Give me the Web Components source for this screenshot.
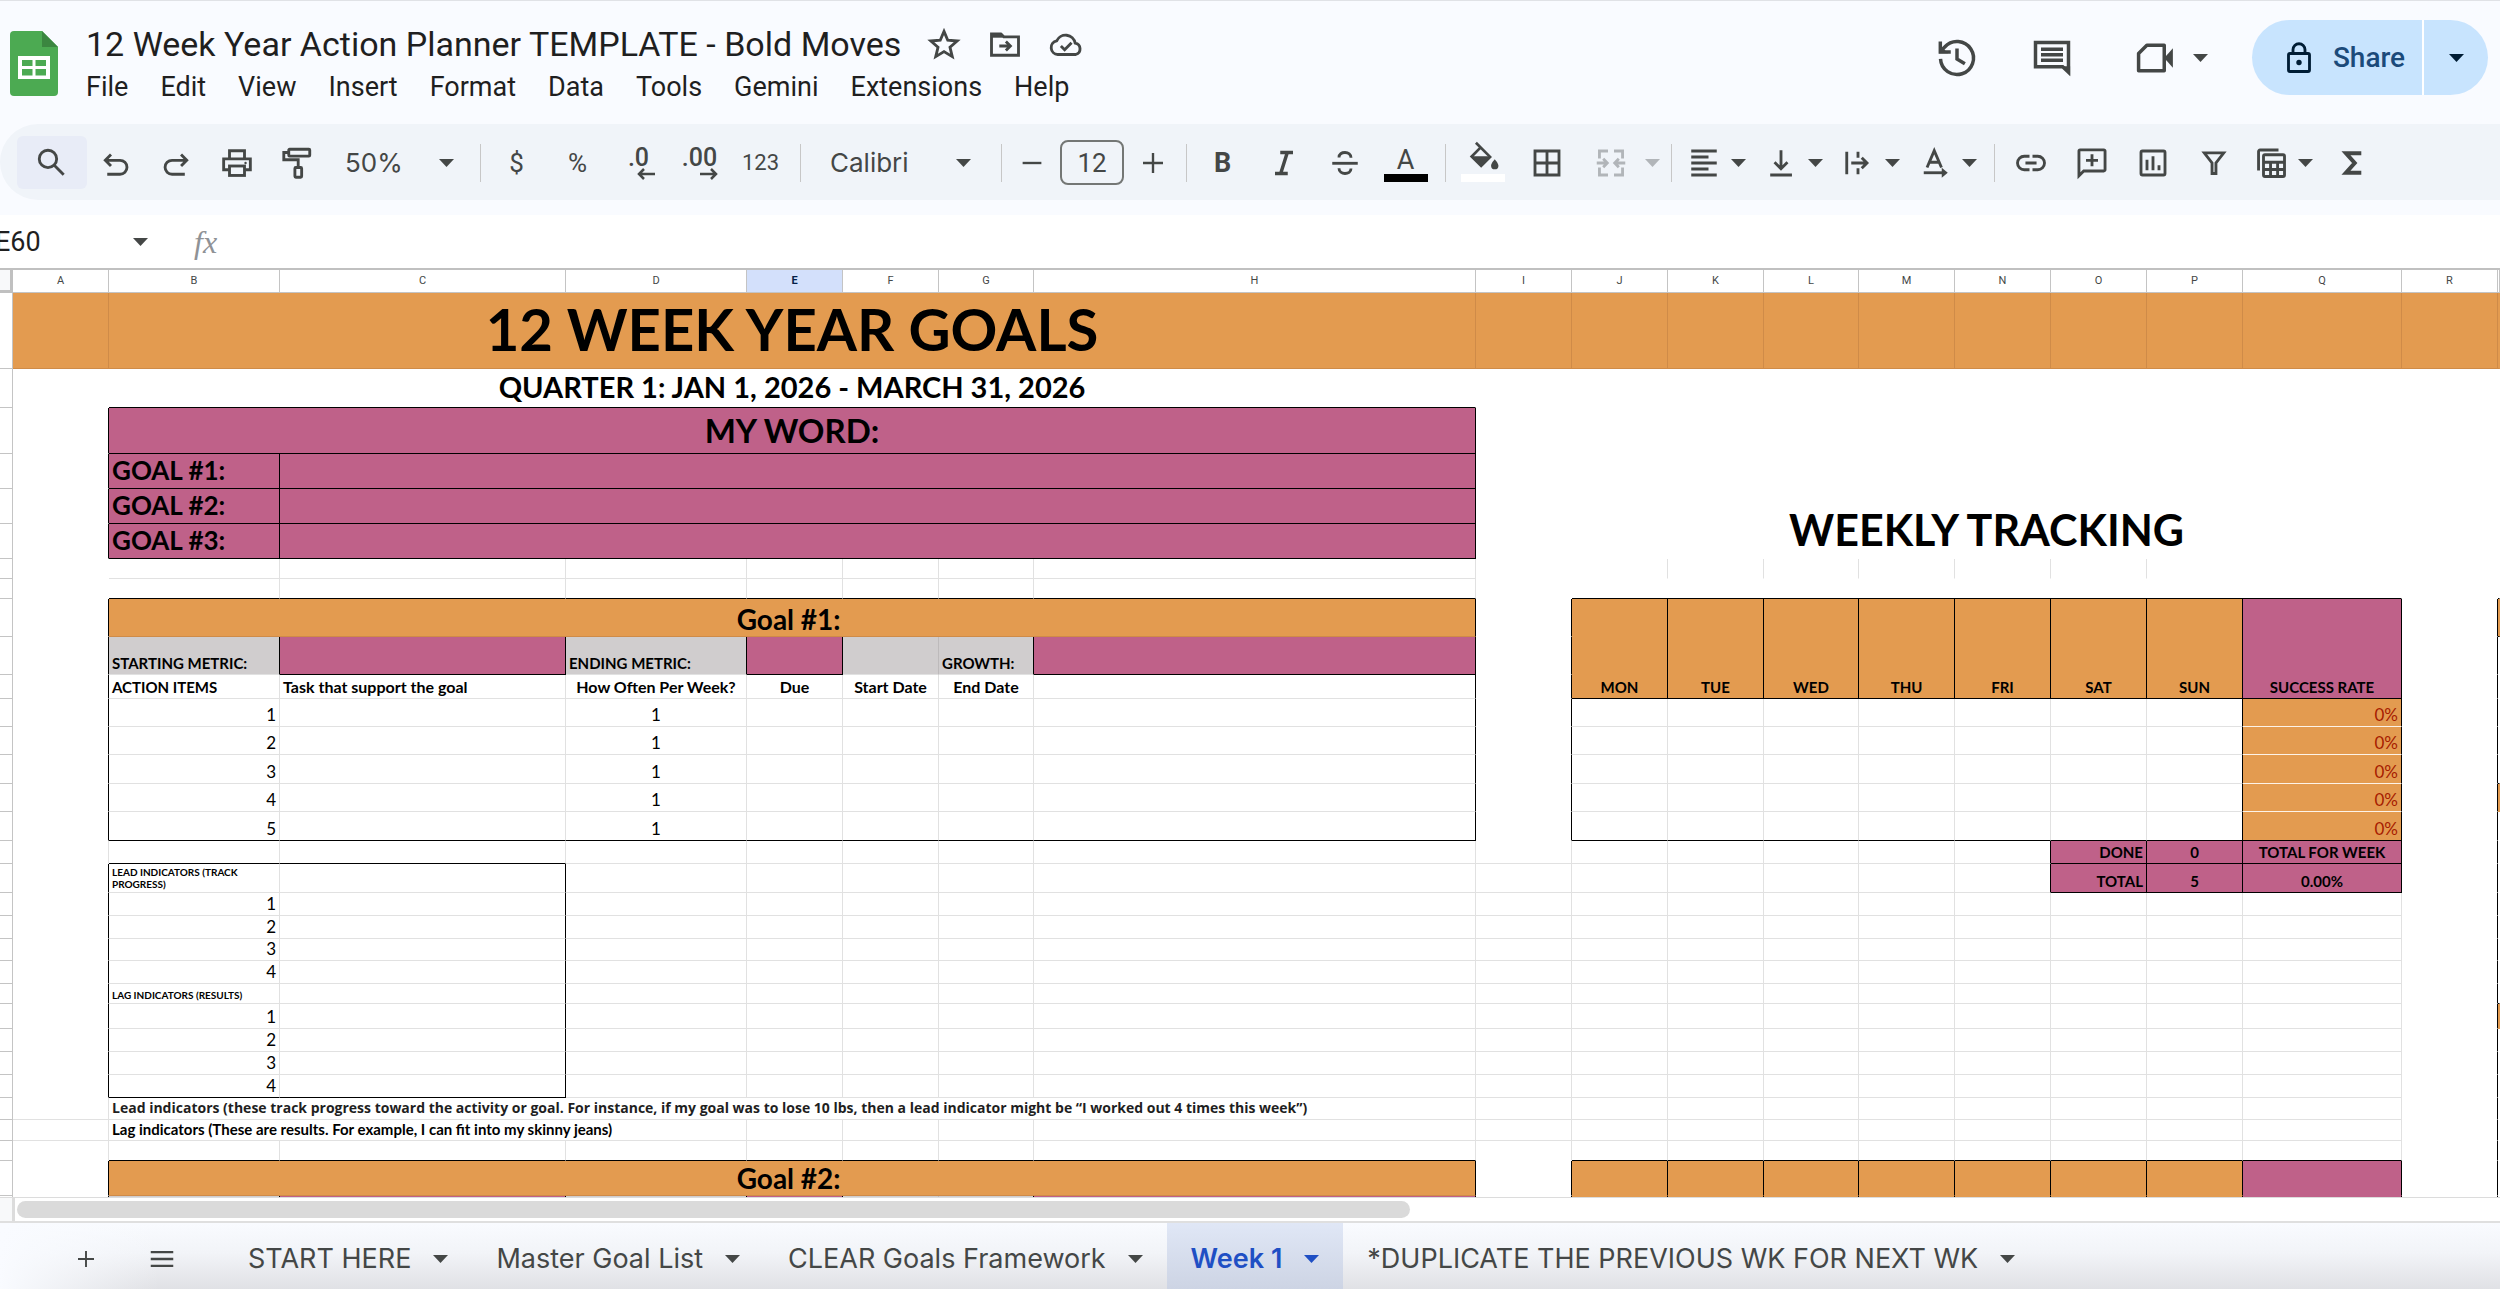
<!DOCTYPE html>
<html lang="en">
<head>
<meta charset="utf-8">
<title>12 Week Year Action Planner TEMPLATE - Bold Moves</title>
<style>
  html, body { margin: 0; height: 100%; background: #fff; overflow: hidden; }
  body { font-family: Roboto, "Liberation Sans", sans-serif; color: #1f1f1f; }
</style>
</head>
<body>
<sheets-app></sheets-app>

<script>
const ICONS = {
  star: '<path d="M12 3.6l2.5 5.9 6.3.5-4.8 4.2 1.5 6.2L12 17.1l-5.5 3.3L8 14.2 3.200 10l6.300-.5z"/>',
  move: '<path d="M3 5.200h6.200l2 2H21v12.300H3z"/><path d="M3 6.500h7.500" stroke-width="2.600"/><path d="M8.200 13.300h7M12.600 10.300l3 3-3 3"/>',
  cloud: '<path d="M6.500 19a4.600 4.600 0 0 1-.7-9.100 6.500 6.500 0 0 1 12.300 1.500A3.900 3.900 0 0 1 18.500 19z"/><path d="M8.600 13.300l2.500 2.500 4.600-4.600"/>',
  history: '<path d="M3 12.500a9 9 0 1 0 2.300-6.500L3 8.300"/><path d="M2.900 3v5.700h5.700"/><path d="M2.200 9.400V4.500l4.900 4.900z" fill="currentColor" stroke="none"/><path d="M12 6.800v5.700l4.300 2.600"/>',
  comment: '<path d="M3 3.500h18v16.300l-3.200-3H3z"/><path d="M17.500 16.500h4.400v5.200z" fill="currentColor" stroke="none"/><path d="M6 7.200h12M6 10.200h12M6 13.200h12"/>',
  video: '<path d="M2.500 9.500L7 5h9.500v14h-14z" stroke-linejoin="round"/><path d="M16.500 12l4.700-5.300v10.600z" fill="currentColor" stroke="none"/>',
  lock: '<rect x="5" y="9" width="14" height="12" rx="1"/><path d="M8 9V6.500a4 4 0 0 1 8 0V9"/><circle cx="12" cy="15" r="1.800" fill="currentColor" stroke="none"/>',
  search: '<circle cx="9.300" cy="9.300" r="5.800"/><path d="M13.500 13.500l6.300 6.300"/>',
  undo: '<path d="M8.500 4.900L4.700 8.700l3.800 3.800M4.700 8.700h9.800a4.600 4.600 0 0 1 0 9.300H6" transform="translate(-.5 1.500)"/>',
  redo: '<path d="M15.500 4.900l3.800 3.800-3.800 3.800M19.300 8.700H9.500a4.600 4.600 0 0 0 0 9.300H18" transform="translate(-.8 1.500)"/>',
  print: '<path d="M7 9V3.800h10V9M6.500 16.500H3.100V9.200h17.800v7.300h-3.400"/><rect x="7" y="14" width="10" height="6.300"/><circle cx="17.700" cy="12" r=".8" fill="currentColor" stroke="none"/>',
  paint: '<rect x="6.500" y="2.800" width="14" height="4.600" rx=".6"/><path d="M6.500 5H3.200v4.800h9.600v5"/><rect x="10.600" y="15" width="4.500" height="6.500" rx=".6"/>',
  minus: '<path d="M4.500 12h15"/>',
  plus: '<path d="M12 4v16M4 12h16"/>',
  italic: '<path d="M9.500 5h8.500M6 19h8.500M14.200 5l-4.400 14" stroke-width="2.300"/>',
  strike: '<path d="M3.500 12.200h17"/><path d="M16 8.500c0-2.300-1.800-3.500-4-3.500S8 6 8 8.300M8 15.500c0 2.400 2 3.500 4 3.500s4-1 4-3.300"/>',
  fill: '<path d="M7 1l10 10-6.300 6.300L4 10.700l6.200-6.200" transform="translate(0 -.5)"/><path d="M3.300 10h14l-6.600 7.200z" fill="currentColor" stroke="none"/><path d="M20.300 12.200s2.600 2.900 2.600 4.500a2.600 2.600 0 0 1-5.200 0c0-1.600 2.600-4.500 2.600-4.500z" fill="currentColor" stroke="none"/>',
  borders: '<path d="M4 4h16v16H4zM12 4v16M4 12h16"/>',
  merge: '<path d="M10 4H4.300v5M4.300 15v5H10M14 4h5.700v5M19.700 15v5H14"/><path d="M2.500 12h6.500M6.800 9.200L9.500 12l-2.700 2.800M21.500 12H15M17.200 9.200L14.500 12l2.700 2.800" stroke-width="1.900"/>',
  align: '<path d="M3.500 4h17M3.500 8h11.500M3.500 12h17M3.500 16h11.500M3.500 20h17"/>',
  bottom: '<path d="M12 3.500v12M7.700 11.500l4.300 4.300 4.300-4.300M4.800 20h14.500"/>',
  wrap: '<path d="M4.500 4.500v15M12 4.500v4M12 15.500v4M7.500 12h10M14.500 8.500l3.500 3.500-3.500 3.500"/>',
  rotate: '<path d="M6.700 15L11.500 3.800 16.300 15M8.300 11.500h6.400"/><path d="M4.500 18.500h14"/><path d="M16.500 15.200l4 3.300-4 3.300z" fill="currentColor" stroke="none"/>',
  link: '<path d="M11 7.500H7.500a4.500 4.500 0 0 0 0 9H11M13 7.500h3.500a4.500 4.500 0 0 1 0 9H13M8.300 12h7.400"/>',
  addcomment: '<path d="M3.300 20.500V4a.8.8 0 0 1 .8-.8h15.800a.8.8 0 0 1 .8.8v12.500a.8.8 0 0 1-.8.800H6.500z"/><path d="M12 6.200v8M8 10.200h8"/>',
  chart: '<rect x="4" y="4" width="16" height="16" rx="1"/><path d="M8 9.800v7M12 7.500v9.300M16 13.500v3.300"/>',
  filter: '<path d="M5.500 5.200h13L13.300 12v7h-2.600v-7z"/>',
  views: '<path d="M3.700 17V4.300a1 1 0 0 1 1-1H17"/><rect x="7" y="6.500" width="14" height="14.500" rx="1"/><path d="M7 11.500h14M7 16.300h14M11.700 11.500V21M16.400 11.500V21"/>',
  sigma: '<path d="M18.200 5.500H8l5.800 6.500L8 18.500h10.200" stroke-width="2.700"/>',
  lines: '<path d="M3 6.500h18M3 12h18M3 17.500h18"/>'
};

class UiIcon extends HTMLElement {
  connectedCallback() {
    const r = this.attachShadow({ mode: 'open' });
    r.innerHTML = `<style>:host{display:inline-flex;flex:none;width:var(--icon,36px);height:var(--icon,36px)}
      svg{width:100%;height:100%;fill:none;stroke:currentColor;stroke-width:1.9;overflow:visible}</style>
      <svg viewBox="0 0 24 24" aria-hidden="true">${ICONS[this.getAttribute('name')]}</svg>`;
  }
}
customElements.define('ui-icon', UiIcon);

class UiCaret extends HTMLElement {
  connectedCallback() {
    const r = this.attachShadow({ mode: 'open' });
    r.innerHTML = `<style>:host{display:inline-flex;flex:none;width:15px;height:8px}svg{width:100%;height:100%}</style>
      <svg viewBox="0 0 15 8" aria-hidden="true"><path d="M0 0h15L7.500 8z" fill="currentColor"/></svg>`;
  }
}
customElements.define('ui-caret', UiCaret);

const RESET = `:host,*{box-sizing:border-box}button,select,input{font:inherit;color:inherit;background:none;border:0;margin:0;padding:0;outline:0;border-radius:0}
  button{display:inline-flex;align-items:center;justify-content:center}select{appearance:none}`;

class DocHeader extends HTMLElement {
  connectedCallback() {
    const menus = ['File','Edit','View','Insert','Format','Data','Tools','Gemini','Extensions','Help'];
    const r = this.attachShadow({ mode: 'open' });
    r.innerHTML = `<style>${RESET}
      :host{display:flex;height:124px;padding:0 12px 0 10px;border-top:1px solid #e0e2e6}
      .logo{width:48px;height:65px;margin:30px 28px 0 0;flex:none}
      .doc{display:flex;flex-direction:column;padding-top:21px}
      .name{display:flex;align-items:center;gap:25px}
      h1{margin:0;font-weight:400;font-size:34px;line-height:44px;white-space:nowrap}
      .name button{color:#444746}
      nav{display:flex;gap:32px;font-size:27px;line-height:42px}
      .actions{display:flex;align-items:flex-start;margin-left:auto;color:#444746}
      .actions>button{height:75px;margin-top:19px}
      .hist,.comm{--icon:44px;width:95px}
      .meet{--icon:44px;width:144px;gap:15px;padding-right:18px;margin-left:9px}
      .share{display:flex;margin-top:19px;height:75px;border-radius:38px;overflow:hidden;background:#c8e4fe;color:#001d35}
      .share button{height:75px}
      .main{width:172px;gap:16px;padding-left:12px;font-size:28px;font-weight:500;border-right:2px solid #fff}
      .main span{color:#1b4a7a}
      .more{width:64px}
    </style>
    <svg class="logo" viewBox="0 0 48 65" aria-hidden="true"><path d="M4 0h28l16 16v45a4 4 0 0 1-4 4H4a4 4 0 0 1-4-4V4a4 4 0 0 1 4-4z" fill="#4caa52"/><path d="M32 0l16 16H32z" fill="#3b8640"/><path d="M8 25h32v23H8z" fill="#fff"/><path d="M12 29h10.500v6H12zM25.500 29H36v6H25.500zM12 38h10.500v6.500H12zM25.500 38H36v6.500H25.500z" fill="#4caa52"/></svg>
    <div class="doc">
      <div class="name"><h1>12 Week Year Action Planner TEMPLATE - Bold Moves</h1>
        <button aria-label="Star"><ui-icon name="star"></ui-icon></button>
        <button aria-label="Move"><ui-icon name="move"></ui-icon></button>
        <button aria-label="Saved"><ui-icon name="cloud"></ui-icon></button></div>
      <nav>${menus.map(m => `<button>${m}</button>`).join('')}</nav>
    </div>
    <div class="actions">
      <button class="hist" aria-label="History"><ui-icon name="history"></ui-icon></button>
      <button class="comm" aria-label="Comments"><ui-icon name="comment"></ui-icon></button>
      <button class="meet" aria-label="Meet"><ui-icon name="video"></ui-icon><ui-caret></ui-caret></button>
      <div class="share"><button class="main"><ui-icon name="lock"></ui-icon><span>Share</span></button><button class="more" aria-label="Share options"><ui-caret></ui-caret></button></div>
    </div>`;
  }
}
customElements.define('doc-header', DocHeader);

class ToolBar extends HTMLElement {
  connectedCallback() {
    const b = (n, cls = '') => `<button class="${cls}" aria-label="${n}"><ui-icon name="${n}"></ui-icon></button>`;
    const m = n => `<button class="menu" aria-label="${n}"><ui-icon name="${n}"></ui-icon><ui-caret></ui-caret></button>`;
    const sep = '<i class="sep"></i>';
    const r = this.attachShadow({ mode: 'open' });
    r.innerHTML = `<style>${RESET}
      :host{display:flex;align-items:center;height:76px;margin-bottom:15px;padding:1px 0 0 17px;background:#f0f4f9;border-radius:38px 0 0 38px;color:#444746;font-size:26px}
      button{width:61px;height:53px;flex:none}
      .search{width:70px;background:#e8ecf7;border-radius:6px}
      .n{width:60px}
      .sep{width:1px;height:38px;margin:0 5px 0 9px;background:#c7c7c7;flex:none}
      .drop{display:grid;align-items:center;flex:none}
      .drop>*{grid-area:1/1}
      .drop select{font-family:Inter,Roboto,sans-serif}
      .drop ui-caret{justify-self:end;margin-right:17px;pointer-events:none}
      .zoom{width:144px}.zoom select{padding-left:18px}
      .font{width:186px}.font select{padding-left:24px}.font ui-caret{margin-right:21px}
      .step{width:49px;--icon:30px}
      input{width:64px;height:45px;margin:0 4px;border:2px solid #747775;border-radius:8px;text-align:center;flex:none}
      .bold{font-weight:700;font-size:27px}
      .small{font-size:22px}
      .dec{flex-direction:column;font-size:25px;font-weight:500;line-height:20px;padding-top:2px}
      .dec svg{width:20px;height:12px;align-self:flex-end;margin-right:12px;fill:none;stroke:currentColor;stroke-width:2.500}
      .ink{flex-direction:column;font-size:27px;line-height:26px;padding-top:3px}
      .ink::after{content:"";width:44px;height:8px;margin-top:1px;background:var(--ink,#000)}
      .wide{width:64px}
      .wide.ink{--icon:34px;--ink:#fff}
      .wide.ink ui-icon{margin:-4px 0 -3px}
      .off{color:#b1b5b9}
      .caret{width:18px;margin-right:1px}
      .menu{width:77px;gap:9px}
    </style>
    ${b('search','search')}${b('undo','n')}${b('redo','n')}${b('print','n')}${b('paint','n')}
    <div class="drop zoom"><select aria-label="Zoom"><option>50%</option></select><ui-caret></ui-caret></div>${sep}
    <button>$</button><button>%</button>
    <button class="dec" aria-label="Decrease decimals">.0<svg viewBox="0 0 20 12"><path d="M2 6h16M7 1L2 6l5 5"/></svg></button>
    <button class="dec" aria-label="Increase decimals">.00<svg viewBox="0 0 20 12"><path d="M2 6h16M13 1l5 5-5 5"/></svg></button>
    <button class="small">123</button>${sep}
    <div class="drop font"><select aria-label="Font"><option>Calibri</option></select><ui-caret></ui-caret></div>${sep}
    ${b('minus','step')}<input value="12" aria-label="Font size">${b('plus','step')}${sep}
    <button class="bold">B</button>${b('italic')}${b('strike')}<button class="ink">A</button>${sep}
    ${b('fill','wide ink')}${b('borders','wide')}${b('merge','wide off')}<button class="caret off" aria-label="Merge options"><ui-caret></ui-caret></button>${sep}
    ${m('align')}${m('bottom')}${m('wrap')}${m('rotate')}${sep}
    ${b('link')}${b('addcomment')}${b('chart')}${b('filter')}${m('views')}${b('sigma')}`;
  }
}
customElements.define('tool-bar', ToolBar);

class FormulaBar extends HTMLElement {
  connectedCallback() {
    const r = this.attachShadow({ mode: 'open' });
    r.innerHTML = `<style>${RESET}
      :host{display:flex;align-items:center;height:53px;background:#fff;color:#1f1f1f;font-size:27px}
      .cell{width:138px;margin-left:-5px}
      button{width:15px;color:#444746}
      label{margin-left:46px;color:#8f9296;font:italic 32px/32px "Liberation Serif",serif}
      .formula{flex:1;min-width:0}
    </style>
    <input class="cell" value="E60" aria-label="Name box"><button aria-label="Named ranges"><ui-caret></ui-caret></button>
    <label for="f">fx</label><input class="formula" id="f">`;
  }
}
customElements.define('formula-bar', FormulaBar);

/* Column widths, row header first; the last column takes what is left. */
const COLS = [13, 96, 171, 286, 181, 96, 96, 95, 442, 96, 96, 96, 95, 96, 96, 96, 96, 159, 96];
/* A cell is [colspan, classes, text, rowspan]. Classes: o/p/g fills, r? and b? right and bottom lines. */
const many = (n, cls) => Array.from({ length: n }, () => [1, cls]);
const end = (cls = '') => [[1, 'rk'], [1, cls]];
const action = (h, n, side = '', b = 'bl') => [h, [
  [1, 'rk'], [1, `rl ${b} num`, n], [1, `rl ${b}`], [1, `rl ${b} num mid`, 1], ...many(3, `rl ${b}`), [1, `rk ${b}`], [1, 'rk'],
  ...many(6, `rl ${b}`), [1, `rk ${b}`], [1, `o rk ${b === 'bk' ? 'bk' : 'bw'} num red`, '0%'], ...end(side)]];
const plain = (h, label, cls, side = '', b = 'bl') => [h, [[1, 'rk'], [1, `rl ${b} ${cls}`, label], [1, `rk ${b}`],
  ...many(14, 'rl bl'), ...end(side)]];
const ROWS = [
  [76, [[1, 'o rd bd'], [7, 'o rd bd h0 mid', '12 WEEK YEAR GOALS'], ...many(10, 'o rd bd'), [1, 'o bd']]],
  [39, [[1, ''], [7, 'bk hq mid', 'QUARTER 1: JAN 1, 2026 - MARCH 31, 2026'], [11, '']]],
  [46, [[1, 'rk'], [7, 'p rk bk h1 mid', 'MY WORD:'], [11, '']]],
  [35, [[1, 'rk'], [1, 'p rk bk h3', 'GOAL #1:'], [6, 'p rk bk'], [11, '']]],
  [35, [[1, 'rk'], [1, 'p rk bk h3', 'GOAL #2:'], [6, 'p rk bk'], [1, ''], [8, 'ht mid', 'WEEKLY TRACKING', 2], [2, '']]],
  [35, [[1, 'rk'], [1, 'p rk bk h3', 'GOAL #3:'], [6, 'p rk bk'], [1, ''], [2, '']]],
  [20, [[1, ''], ...many(7, 'rl bl'), [1, ''], ...many(6, 'rl'), [4, '']]],
  [20, [[1, ''], ...many(7, 'rl bk'), [1, ''], [8, 'bk'], [1, ''], [1, 'bk']]],
  [38, [[1, 'rk'], [7, 'o rk bd h2 mid', 'Goal #1:&nbsp;'], [1, 'rk'],
    ...['MON', 'TUE', 'WED', 'THU', 'FRI', 'SAT', 'SUN'].map(d => [1, 'o rk bk b mid', d, 3]), [1, 'p rk bk b mid', 'SUCCESS RATE', 3], ...end('o bk')]],
  [38, [[1, 'rk'], [1, 'g rk bl b', 'STARTING METRIC:'], [1, 'p rk bk'], [1, 'g rk bl b', 'ENDING METRIC:'], [1, 'p rk bk'], [1, 'g rg bl'],
    [1, 'g rk bl b', 'GROWTH:'], [1, 'p rk bk'], [1, 'rk'], ...end()]],
  [24, [[1, 'rk'], [1, 'rl bl b', 'ACTION ITEMS'], [1, 'rl bl c', 'Task that support the goal'], [1, 'rl bl c mid', 'How Often Per Week?'],
    [1, 'rl bl c mid', 'Due'], [1, 'rl bl c mid', 'Start Date'], [1, 'rl bl c mid', 'End Date'], [1, 'rk bl'], [1, 'rk'], ...end()]],
  action(28, 1), action(28, 2), action(29, 3, 'bk'), action(28, 4, 'o'), action(29, 5, '', 'bk'),
  [23, [[1, 'rl'], ...many(2, 'rl bk'), ...many(10, 'rl bl'), [1, 'rk bl'], [1, 'p rk bk b end', 'DONE'], [1, 'p rk bk b mid', 0], [1, 'p rk bk b mid', 'TOTAL FOR WEEK'], ...end()]],
  [29, [[1, 'rk'], [1, 'rl bl tiny', 'LEAD INDICATORS (TRACK PROGRESS)'], [1, 'rk bl'], ...many(10, 'rl bl'), [1, 'rk bl'],
    [1, 'p rk bk b end', 'TOTAL'], [1, 'p rk bk b mid', 5], [1, 'p rk bk b mid', '0.00%'], ...end()]],
  plain(23, 1, 'num'), plain(23, 2, 'num'), plain(22, 3, 'num'), plain(23, 4, 'num'),
  plain(20, 'LAG INDICATORS (RESULTS)', 'tiny', 'bk'),
  plain(25, 1, 'num', 'o'), plain(23, 2, 'num'), plain(23, 3, 'num'), plain(23, 4, 'num', '', 'bk'),
  [22, [[1, 'rl bl'], [7, 'rl bl note', 'Lead indicators (these track progress toward the activity or goal. For instance, if my goal was to lose 10 lbs, then a lead indicator might be “I worked out 4 times this week”)'], ...many(9, 'rl bl'), ...end()]],
  [21, [[1, 'rl bl'], [3, 'rl bl b', 'Lag indicators (These are results. For example, I can fit into my skinny jeans)'], ...many(13, 'rl bl'), ...end()]],
  [20, [[1, 'rl'], ...many(7, 'rl bk'), [1, 'rl'], ...many(8, 'rl bk'), ...end()]],
  [35, [[1, 'rk'], [7, 'o rk bd h2 mid', 'Goal #2:&nbsp;'], [1, 'rk'], ...many(7, 'o rk'), [1, 'p rk'], ...end()]],
  [38, [[1, 'rk'], [1, 'g rk'], [1, 'p rk'], [1, 'g rk'], [1, 'p rk'], [1, 'g rg'], [1, 'g rk'], [1, 'p rk'], [1, 'rk'], ...many(7, 'o rk'), [1, 'p rk'], ...end()]]
];

class SheetGrid extends HTMLElement {
  connectedCallback() {
    const letters = 'ABCDEFGHIJKLMNOPQR'.split('');
    const r = this.attachShadow({ mode: 'open' });
    r.innerHTML = `<style>:host,*{box-sizing:border-box}
      :host{display:block;overflow:hidden;border-top:2px solid #c0c0c0;font-family:Lato,"Liberation Sans",sans-serif;color:#000}
      table{width:100%;table-layout:fixed;border-collapse:separate;border-spacing:0}
      th,td{padding:0 3px 2px;border:solid transparent;border-width:0 1px 1px 0;vertical-align:bottom;text-align:left;white-space:nowrap;line-height:1.2;font-weight:400;font-size:16px}
      th{padding:0;background:#fff;border-color:#c4c4c4;vertical-align:middle;text-align:center;font:11px/14px Roboto,sans-serif;color:#444746}
      td:last-child{padding:0}
      thead th.on{background:#d3e0fb;color:#041e49;font-weight:700}
      thead th:first-child{background:#f8f9fa;border:solid #c0c0c0;border-width:0 3px 3px 0}
      .o{background:#e39b50}.p{background:#bf6189}.g{background:#d0cdce}
      .rk{border-right-color:#000}.rl{border-right-color:#e1e1e1}.rd{border-right-color:#cf8b48}.rg{border-right-color:#bdbabb}
      .bk{border-bottom-color:#000}.bl{border-bottom-color:#e1e1e1}.bd{border-bottom-color:#cf8b48}.bw{border-bottom-color:#fdf3e8}
      .mid{text-align:center}.end,.num{text-align:right}.num{font-size:17px;line-height:19px}.num.mid{text-align:center}.red{color:#a61c00}
      .h0,.h1,.hq,.h2,.h3,.ht,.b,.c,.tiny,.note{font-weight:700}
      .h0{font-size:58px;padding-bottom:4px}.ht{font-size:43px}.h1{font-size:33px}.hq{font-size:29px}.h2{font-size:28px;line-height:30px}.h3{font-size:26px}
      .b{font-size:15px}.c{font-size:16px}.tiny{font-size:10px;line-height:12px;white-space:normal}.note{font:700 14px/18px "Open Sans",sans-serif;color:#1f1f1f}
    </style>
    <table><colgroup>${COLS.map(w => `<col style="width:${w}px">`).join('')}<col></colgroup>
    <thead><tr style="height:23px"><th></th>${letters.map(l => `<th class="${l === 'E' ? 'on' : ''}">${l}</th>`).join('')}<th></th></tr></thead>
    <tbody>${ROWS.map(([h, cells]) => `<tr style="height:${h}px"><th></th>${cells.map(([s, c, t = '', rs = 1]) =>
      `<td class="${c}" colspan="${s}" rowspan="${rs}">${t}</td>`).join('')}</tr>`).join('')}</tbody></table>`;
  }
}
customElements.define('sheet-grid', SheetGrid);

class SheetScroll extends HTMLElement {
  connectedCallback() {
    const r = this.attachShadow({ mode: 'open' });
    r.innerHTML = `<style>:host{display:flex;align-items:center;height:26px;box-sizing:border-box;border-top:1px solid #dcdcdc;border-bottom:2px solid #dfdfdf;background:#fff}
      .stub{width:12px;height:100%;background:#f8f9fa;border-right:3px solid #dcdcdc}
      .thumb{width:55.7%;height:17px;margin-left:2px;border-radius:9px;background:#dadada}</style><div class="stub"></div><div class="thumb"></div>`;
  }
}
customElements.define('sheet-scroll', SheetScroll);

class SheetTabs extends HTMLElement {
  connectedCallback() {
    const tabs = ['START HERE', 'Master Goal List', 'CLEAR Goals Framework', 'Week 1', '*DUPLICATE THE PREVIOUS WK FOR NEXT WK'];
    const r = this.attachShadow({ mode: 'open' });
    r.innerHTML = `<style>${RESET}
      :host{display:flex;height:66px;padding-left:48px;background:linear-gradient(90deg,#f9fbff,transparent 160px),linear-gradient(#f9fbff,#f2f4f8 45%,#e0e1e5);color:#444746;font-family:Inter,Roboto,sans-serif;font-size:27px}
      button{padding-top:5px}
      .tool{width:76px;--icon:30px}
      .add{--icon:24px}
      .tabs{display:flex;margin-left:24px}
      .tab{gap:22px;padding:5px 24px 0 24px;white-space:nowrap}
      .on{background:linear-gradient(#e0e7f6,#cdd4e4);color:#1f4fc4;font-weight:600}
    </style>
    <button class="tool add" aria-label="Add sheet"><ui-icon name="plus"></ui-icon></button><button class="tool" aria-label="All sheets"><ui-icon name="lines"></ui-icon></button>
    <div class="tabs">${tabs.map(t => `<button class="tab ${t === 'Week 1' ? 'on' : ''}">${t}<ui-caret></ui-caret></button>`).join('')}</div>`;
  }
}
customElements.define('sheet-tabs', SheetTabs);

class SheetsApp extends HTMLElement {
  connectedCallback() {
    const r = this.attachShadow({ mode: 'open' });
    r.innerHTML = `<style>:host{display:flex;flex-direction:column;height:100vh}
      header{background:#f9fbff}sheet-grid{flex:1;min-height:0}</style>
      <header><doc-header></doc-header><tool-bar></tool-bar></header>
      <formula-bar></formula-bar><sheet-grid></sheet-grid><sheet-scroll></sheet-scroll><sheet-tabs></sheet-tabs>`;
  }
}
customElements.define('sheets-app', SheetsApp);
</script>
</body>
</html>
